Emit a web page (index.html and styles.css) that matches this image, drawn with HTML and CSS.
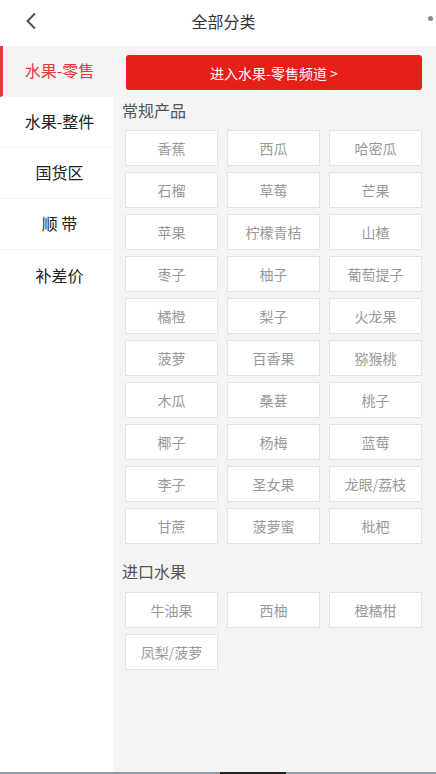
FILE: index.html
```html
<!DOCTYPE html>
<html lang="zh">
<head>
<meta charset="utf-8">
<title>全部分类</title>
<link rel="stylesheet" href="styles.css">
</head>
<body>
<div class="page">
  <header class="topbar">
    <span class="back">
      <svg width="12" height="18" viewBox="0 0 12 18"><path d="M10 1.5 L2.5 9 L10 16.5" fill="none" stroke="#4b505c" stroke-width="2"/></svg>
    </span>
    <h1 class="title">全部分类</h1>
    <span class="dot"></span>
  </header>
  <div class="main">
    <nav class="side">
      <div class="side-item active">水果-零售</div>
      <div class="side-item">水果-整件</div>
      <div class="side-item">国货区</div>
      <div class="side-item">顺 带</div>
      <div class="side-item">补差价</div>
    </nav>
    <section class="content">
      <div class="enter">进入水果-零售频道 &gt;</div>
      <h2 class="group-title">常规产品</h2>
      <div class="grid">
        <div class="cell">香蕉</div><div class="cell">西瓜</div><div class="cell">哈密瓜</div>
        <div class="cell">石榴</div><div class="cell">草莓</div><div class="cell">芒果</div>
        <div class="cell">苹果</div><div class="cell">柠檬青桔</div><div class="cell">山楂</div>
        <div class="cell">枣子</div><div class="cell">柚子</div><div class="cell">葡萄提子</div>
        <div class="cell">橘橙</div><div class="cell">梨子</div><div class="cell">火龙果</div>
        <div class="cell">菠萝</div><div class="cell">百香果</div><div class="cell">猕猴桃</div>
        <div class="cell">木瓜</div><div class="cell">桑葚</div><div class="cell">桃子</div>
        <div class="cell">椰子</div><div class="cell">杨梅</div><div class="cell">蓝莓</div>
        <div class="cell">李子</div><div class="cell">圣女果</div><div class="cell">龙眼/荔枝</div>
        <div class="cell">甘蔗</div><div class="cell">菠萝蜜</div><div class="cell">枇杷</div>
      </div>
      <h2 class="group-title second">进口水果</h2>
      <div class="grid">
        <div class="cell">牛油果</div><div class="cell">西柚</div><div class="cell">橙橘柑</div>
        <div class="cell">凤梨/菠萝</div>
      </div>
    </section>
  </div>
  <div class="homebar"><span class="indicator"></span></div>
</div>
</body>
</html>
```

FILE: styles.css
```css
* { box-sizing: border-box; }
html, body { margin: 0; padding: 0; }
body {
  font-family: "Noto Sans CJK SC", "Noto Sans", sans-serif;
  color: #333;
  background: #fff;
}
.page {
  width: 436px;
  height: 774px;
  display: flex;
  flex-direction: column;
  overflow: hidden;
}
.topbar {
  height: 46px;
  flex: none;
  display: flex;
  align-items: center;
  padding: 0 3px 4px 25px;
  background: #fff;
}
.back { width: 12px; height: 18px; display: flex; flex: none; }
.title {
  flex: 1;
  margin: 0;
  font-size: 16px;
  font-weight: normal;
  color: #333;
  line-height: 1;
  text-align: center;
  padding-right: 18px;
}
.dot {
  flex: none;
  width: 5px;
  height: 5px;
  border-radius: 50%;
  background: #8a8a8a;
  margin-bottom: 6px;
}
.main {
  flex: 1;
  display: flex;
  min-height: 0;
}
.side {
  width: 113px;
  flex: none;
  background: #fff;
}
.side-item {
  height: 51px;
  display: flex;
  align-items: center;
  justify-content: center;
  font-size: 16px;
  color: #222;
  border-left: 3px solid transparent;
  padding-left: 3px;
  border-bottom: 1px solid #f0f0f0;
  padding-bottom: 2px;
}
.side-item.active {
  background: #f4f4f4;
  color: #e4393c;
  border-left-color: #e4393c;
  border-bottom-color: #f4f4f4;
}
.side-item:last-child { border-bottom: none; }
.content {
  flex: 1;
  background: #f4f4f4;
  padding: 9px 14px 0 9px;
}
.enter {
  height: 35px;
  margin-left: 4px;
  background: #e61f19;
  border-radius: 3px;
  color: #fff;
  font-size: 14px;
  display: flex;
  align-items: center;
  justify-content: center;
}
.group-title {
  margin: 0;
  font-size: 16px;
  font-weight: normal;
  color: #555;
  height: 40px;
  line-height: 40px;
}
.group-title.second { margin-top: 6px; height: 42px; line-height: 42px; }
.grid {
  display: grid;
  grid-template-columns: repeat(3, 93px);
  column-gap: 9px;
  row-gap: 6px;
  padding-left: 3px;
}
.cell {
  height: 36px;
  background: #fff;
  border: 1px solid #e4e4e4;
  display: flex;
  align-items: center;
  justify-content: center;
  font-size: 14px;
  color: #999;
}
.homebar {
  height: 2px;
  flex: none;
  background: #8b9ba6;
  display: flex;
  justify-content: center;
}
.indicator {
  width: 66px;
  height: 2px;
  background: #222;
  margin-left: 69px;
}
```
